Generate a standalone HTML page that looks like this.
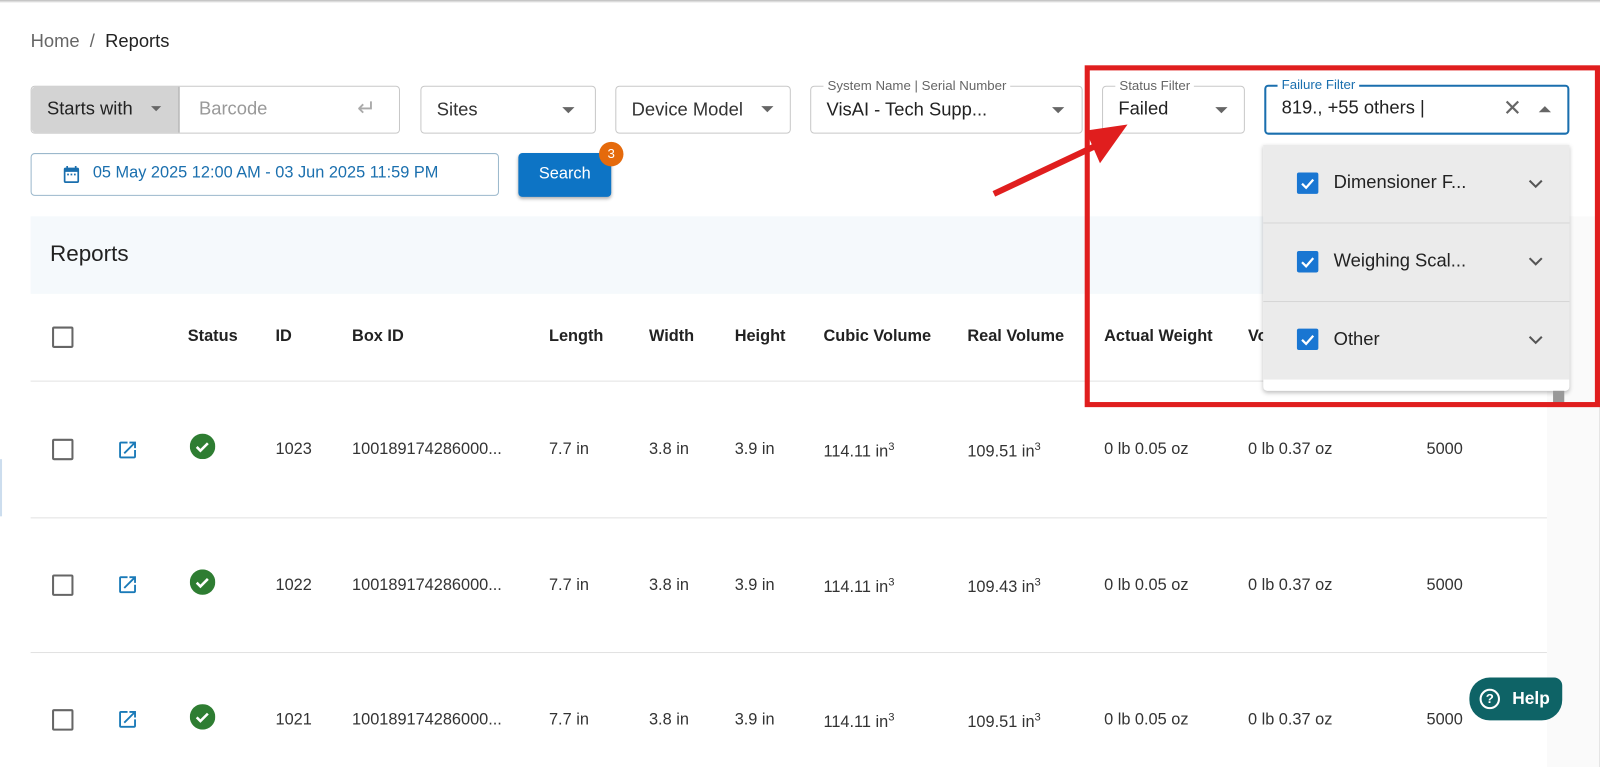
<!DOCTYPE html>
<html><head><meta charset="utf-8"><style>
*{box-sizing:border-box;margin:0;padding:0}
html,body{width:1600px;height:748px;overflow:hidden;background:#fff}
#w{position:absolute;left:0;top:0;width:1568px;height:733px;transform:scale(1.0204);transform-origin:0 0;font-family:"Liberation Sans",Arial,sans-serif;color:#222}
.a{position:absolute}
.box{position:absolute;border:1px solid #c8c8c8;border-radius:4px;background:#fff}
.lbl{position:absolute;top:-8px;background:#fff;padding:0 4px;font-size:13px;color:#666;line-height:14px}
.tri{position:absolute;width:0;height:0;border-left:6px solid transparent;border-right:6px solid transparent;border-top:6px solid #666}
.t{position:absolute;font-size:18px;color:#333}
.th{position:absolute;font-size:16px;font-weight:bold;color:#222;top:321px}
.td{position:absolute;font-size:16px;color:#333}
.cb{position:absolute;width:21px;height:21px;border:2px solid #666;border-radius:2px}
.hl{position:absolute;left:30px;width:1486px;height:1px;background:#e2e2e2}
.ck{position:absolute;width:21px;height:21px;background:#1976d2;border-radius:2px}
sup{font-size:11px}
</style></head><body><div id="w">
<div class="a" style="left:0;top:0;width:1600px;height:3px;background:linear-gradient(#bbb,#fff)"></div>
<div class="a" style="left:30px;top:30px;font-size:18px;color:#666">Home&nbsp; /&nbsp; <span style="color:#222">Reports</span></div>

<div class="box" style="left:30px;top:84px;width:362px;height:47px"></div>
<div class="a" style="left:31px;top:85px;width:145px;height:45px;background:#d3d3d3;border-right:1px solid #999;border-radius:4px 0 0 4px"></div>
<div class="t" style="left:46px;top:96px;color:#222">Starts with</div>
<div class="tri" style="left:148px;top:104px;border-top-width:5px;border-left-width:5px;border-right-width:5px"></div>
<div class="t" style="left:195px;top:96px;color:#999">Barcode</div>
<div class="t" style="left:350px;top:93px;color:#aaa;font-size:22px">↵</div>

<div class="box" style="left:412px;top:84px;width:172px;height:47px"></div>
<div class="t" style="left:428px;top:97px">Sites</div><div class="tri" style="left:551px;top:105px"></div>
<div class="box" style="left:603px;top:84px;width:172px;height:47px"></div>
<div class="t" style="left:619px;top:97px">Device Model</div><div class="tri" style="left:746px;top:104px"></div>
<div class="box" style="left:794px;top:84px;width:267px;height:47px"><div class="lbl" style="left:12px">System Name | Serial Number</div></div>
<div class="t" style="left:810px;top:97px;color:#222">VisAI - Tech Supp...</div><div class="tri" style="left:1031px;top:105px"></div>
<div class="box" style="left:1080px;top:84px;width:140px;height:47px"><div class="lbl" style="left:12px">Status Filter</div></div>
<div class="t" style="left:1096px;top:96px;color:#222">Failed</div><div class="tri" style="left:1191px;top:105px"></div>
<div class="box" style="left:1239px;top:83px;width:299px;height:49px;border:2px solid #1a6fae"><div class="lbl" style="left:11px;top:-9px;color:#1a6fae">Failure Filter</div></div>
<div class="t" style="left:1256px;top:95px;color:#222">819., +55 others |</div>
<div class="t" style="left:1473px;top:93px;color:#666;font-size:22px">✕</div>
<div class="a" style="left:1508px;top:104px;border-left:6px solid transparent;border-right:6px solid transparent;border-bottom:6px solid #666"></div>

<div class="box" style="left:30px;top:150px;width:459px;height:42px;border-color:#9bb8cc"></div>
<svg class="a" style="left:60px;top:161px" width="20" height="20" viewBox="0 0 24 24"><path fill="#1a6fae" d="M19 4h-1V2h-2v2H8V2H6v2H5a2 2 0 0 0-2 2v14a2 2 0 0 0 2 2h14a2 2 0 0 0 2-2V6a2 2 0 0 0-2-2zm0 16H5V9h14zM7 11h2v2H7zm4 0h2v2h-2zm4 0h2v2h-2z"/></svg>
<div class="a" style="left:91px;top:161px;font-size:16px;color:#1a6fae">05 May 2025 12:00 AM - 03 Jun 2025 11:59 PM</div>
<div class="a" style="left:508px;top:150px;width:91px;height:43px;background:#0d74c5;border-radius:4px;box-shadow:0 2px 3px rgba(0,0,0,.3);color:#fff;font-size:16px;text-align:center;line-height:42px">Search</div>
<div class="a" style="left:587px;top:139px;width:24px;height:24px;border-radius:50%;background:#e56a0c;color:#fff;font-size:13px;text-align:center;line-height:24px">3</div>

<div class="a" style="left:30px;top:212px;width:1486px;height:76px;background:#f5f9fc"></div>
<div class="a" style="left:49px;top:236px;font-size:22px;color:#222">Reports</div>
<div class="a" style="left:1516px;top:212px;width:52px;height:540px;background:#fafafa;border-right:1px solid #e5e5e5"></div>
<div class="a" style="left:0;top:450px;width:2px;height:56px;background:#cde"></div>

<div class="cb" style="left:51px;top:320px"></div>
<div class="th" style="left:184px">Status</div><div class="th" style="left:270px">ID</div><div class="th" style="left:345px">Box ID</div><div class="th" style="left:538px">Length</div><div class="th" style="left:636px">Width</div><div class="th" style="left:720px">Height</div><div class="th" style="left:807px">Cubic Volume</div><div class="th" style="left:948px">Real Volume</div><div class="th" style="left:1082px">Actual Weight</div><div class="th" style="left:1223px">Vo</div>
<div class="hl" style="top:373px"></div><div class="hl" style="top:507px"></div><div class="hl" style="top:639px"></div>

<div class="cb" style="left:51px;top:430px"></div><div class="cb" style="left:51px;top:563px"></div><div class="cb" style="left:51px;top:695px"></div>
<svg class="a" style="left:114px;top:430px" width="22" height="22" viewBox="0 0 24 24"><path fill="#1a7ab8" d="M19 19H5V5h7V3H5a2 2 0 0 0-2 2v14a2 2 0 0 0 2 2h14c1.1 0 2-.9 2-2v-7h-2v7zM14 3v2h3.59l-9.830 9.830 1.41 1.41L19 6.41V10h2V3h-7z"/></svg>
<svg class="a" style="left:114px;top:562px" width="22" height="22" viewBox="0 0 24 24"><path fill="#1a7ab8" d="M19 19H5V5h7V3H5a2 2 0 0 0-2 2v14a2 2 0 0 0 2 2h14c1.1 0 2-.9 2-2v-7h-2v7zM14 3v2h3.59l-9.83 9.83 1.41 1.41L19 6.41V10h2V3h-7z"/></svg>
<svg class="a" style="left:114px;top:694px" width="22" height="22" viewBox="0 0 24 24"><path fill="#1a7ab8" d="M19 19H5V5h7V3H5a2 2 0 0 0-2 2v14a2 2 0 0 0 2 2h14c1.1 0 2-.9 2-2v-7h-2v7zM14 3v2h3.59l-9.83 9.83 1.41 1.41L19 6.41V10h2V3h-7z"/></svg>
<svg class="a" style="left:186px;top:425px" width="25" height="25" viewBox="0 0 24 24"><circle cx="12" cy="12" r="12" fill="#2e7d32"/><path d="M6.5 12.5l3.5 3.5 7-7" stroke="#fff" stroke-width="2.4" fill="none"/></svg>
<svg class="a" style="left:186px;top:558px" width="25" height="25" viewBox="0 0 24 24"><circle cx="12" cy="12" r="12" fill="#2e7d32"/><path d="M6.5 12.5l3.5 3.5 7-7" stroke="#fff" stroke-width="2.4" fill="none"/></svg>
<svg class="a" style="left:186px;top:690px" width="25" height="25" viewBox="0 0 24 24"><circle cx="12" cy="12" r="12" fill="#2e7d32"/><path d="M6.5 12.5l3.5 3.5 7-7" stroke="#fff" stroke-width="2.4" fill="none"/></svg>

<div class="td" style="left:270px;top:432px">1023</div><div class="td" style="left:345px;top:432px">100189174286000...</div><div class="td" style="left:538px;top:432px">7.7 in</div><div class="td" style="left:636px;top:432px">3.8 in</div><div class="td" style="left:720px;top:432px">3.9 in</div><div class="td" style="left:807px;top:432px">114.11 in<sup>3</sup></div><div class="td" style="left:948px;top:432px">109.51 in<sup>3</sup></div><div class="td" style="left:1082px;top:432px">0 lb 0.05 oz</div><div class="td" style="left:1223px;top:432px">0 lb 0.37 oz</div><div class="td" style="left:1398px;top:432px">5000</div>
<div class="td" style="left:270px;top:565px">1022</div><div class="td" style="left:345px;top:565px">100189174286000...</div><div class="td" style="left:538px;top:565px">7.7 in</div><div class="td" style="left:636px;top:565px">3.8 in</div><div class="td" style="left:720px;top:565px">3.9 in</div><div class="td" style="left:807px;top:565px">114.11 in<sup>3</sup></div><div class="td" style="left:948px;top:565px">109.43 in<sup>3</sup></div><div class="td" style="left:1082px;top:565px">0 lb 0.05 oz</div><div class="td" style="left:1223px;top:565px">0 lb 0.37 oz</div><div class="td" style="left:1398px;top:565px">5000</div>
<div class="td" style="left:270px;top:697px">1021</div><div class="td" style="left:345px;top:697px">100189174286000...</div><div class="td" style="left:538px;top:697px">7.7 in</div><div class="td" style="left:636px;top:697px">3.8 in</div><div class="td" style="left:720px;top:697px">3.9 in</div><div class="td" style="left:807px;top:697px">114.11 in<sup>3</sup></div><div class="td" style="left:948px;top:697px">109.51 in<sup>3</sup></div><div class="td" style="left:1082px;top:697px">0 lb 0.05 oz</div><div class="td" style="left:1223px;top:697px">0 lb 0.37 oz</div><div class="td" style="left:1398px;top:697px">5000</div>

<div class="a" style="left:1238px;top:142px;width:300px;height:241px;background:#fff;box-shadow:0 2px 4px rgba(0,0,0,.25);border-radius:0 0 4px 4px"></div>
<div class="a" style="left:1238px;top:142px;width:300px;height:230px;background:#ebebeb"></div>
<div class="a" style="left:1238px;top:218px;width:300px;height:1px;background:#d6d6d6"></div>
<div class="a" style="left:1238px;top:295px;width:300px;height:1px;background:#d6d6d6"></div>
<div class="a" style="left:1522px;top:383px;width:11px;height:12px;background:#999"></div>
<div class="ck" style="left:1271px;top:169px"></div><div class="ck" style="left:1271px;top:246px"></div><div class="ck" style="left:1271px;top:322px"></div>
<svg class="a" style="left:1271px;top:169px" width="21" height="21"><path d="M5 11l4 4 7-8" stroke="#fff" stroke-width="2.2" fill="none"/></svg>
<svg class="a" style="left:1271px;top:246px" width="21" height="21"><path d="M5 11l4 4 7-8" stroke="#fff" stroke-width="2.2" fill="none"/></svg>
<svg class="a" style="left:1271px;top:322px" width="21" height="21"><path d="M5 11l4 4 7-8" stroke="#fff" stroke-width="2.2" fill="none"/></svg>
<div class="t" style="left:1307px;top:168px;color:#222">Dimensioner F...</div>
<div class="t" style="left:1307px;top:245px;color:#222">Weighing Scal...</div>
<div class="t" style="left:1307px;top:322px;color:#222">Other</div>
<svg class="a" style="left:1497px;top:174px" width="16" height="12"><path d="M2 3l6 6 6-6" stroke="#555" stroke-width="2" fill="none"/></svg>
<svg class="a" style="left:1497px;top:250px" width="16" height="12"><path d="M2 3l6 6 6-6" stroke="#555" stroke-width="2" fill="none"/></svg>
<svg class="a" style="left:1497px;top:327px" width="16" height="12"><path d="M2 3l6 6 6-6" stroke="#555" stroke-width="2" fill="none"/></svg>

<div class="a" style="left:1063px;top:64px;width:505px;height:335px;border:5px solid #e01e1e"></div>
<svg class="a" style="left:960px;top:120px" width="160" height="80"><path d="M14 70L120 20" stroke="#e01e1e" stroke-width="6"/><path d="M104 8L145 2L118 40Z" fill="#e01e1e"/></svg>

<div class="a" style="left:1440px;top:664px;width:91px;height:42px;background:#0e6366;border-radius:20px 8px 20px 20px;color:#fff;font-weight:bold;font-size:17px;line-height:42px;padding-left:42px">Help</div>
<div class="a" style="left:1450px;top:675px;width:20px;height:20px;border:2px solid #fff;border-radius:50%;color:#fff;font-size:13px;text-align:center;line-height:16px;font-weight:bold">?</div>
</div></body></html>
